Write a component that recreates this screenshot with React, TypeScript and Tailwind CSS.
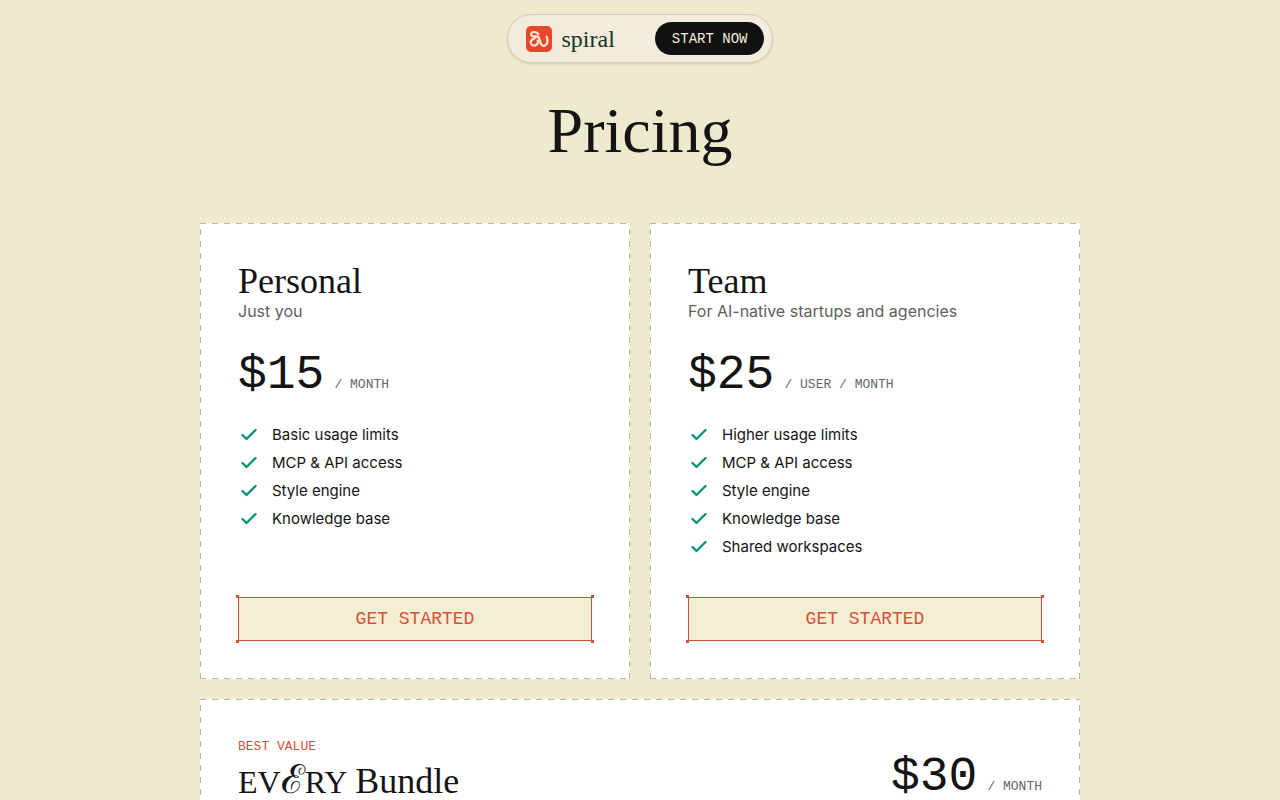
interface Plan {
  name: string
  tagline: string
  price: string
  unit: string
  features: string[]
}

const plans: Plan[] = [
  {
    name: 'Personal',
    tagline: 'Just you',
    price: '$15',
    unit: '/ MONTH',
    features: ['Basic usage limits', 'MCP & API access', 'Style engine', 'Knowledge base'],
  },
  {
    name: 'Team',
    tagline: 'For AI-native startups and agencies',
    price: '$25',
    unit: '/ USER / MONTH',
    features: ['Higher usage limits', 'MCP & API access', 'Style engine', 'Knowledge base', 'Shared workspaces'],
  },
]

function Logo() {
  return (
    <svg viewBox="0 0 26 26" className="size-[26px] shrink-0" aria-hidden="true">
      <rect width="26" height="26" rx="5" fill="#e8472b" />
      <g fill="none" stroke="#f6ecdc" strokeLinecap="round" strokeLinejoin="round">
        <path d="M12.4 8.2C10.8 5.6 6.4 5.2 5.2 7.4c-1 2.2 1.4 3.4 4 3 2.4-.4 3.6.4 4.2 2.4l1.4 4.6c.7 2.2 2.8 3.2 4.6 1.8 2.4-1.8 2.6-5.4 1.2-8.6" strokeWidth="2.1" />
        <path d="M9.8 11C8.4 12.6 4.8 13.4 4.6 16.2c-.1 2.6 2.6 4 5 3 2.2-1 2.8-3 2-4.8" strokeWidth="2.1" />
      </g>
    </svg>
  )
}

function Check() {
  return (
    <svg viewBox="0 0 22 20" className="h-5 w-[22px] shrink-0" aria-hidden="true">
      <path d="M4.5 10l4 4L17.5 5" fill="none" stroke="#0a9373" strokeWidth="2.4" strokeLinecap="round" strokeLinejoin="round" />
    </svg>
  )
}

// Long dashes: 6px on, 6px off along every edge
function DashedFrame() {
  return (
    <svg className="pointer-events-none absolute inset-0 size-full" aria-hidden="true">
      <g fill="none" stroke="#b9b8a2" strokeWidth="2" strokeDasharray="6 6">
        <line x1="0" y1="0" x2="100%" y2="0" />
        <line x1="0" y1="100%" x2="100%" y2="100%" />
        <line x1="0" y1="6" x2="0" y2="100%" />
        <line x1="100%" y1="6" x2="100%" y2="100%" />
      </g>
    </svg>
  )
}

function Price({ amount, unit }: { amount: string; unit: string }) {
  return (
    <p className="flex items-baseline gap-2.5 font-['Liberation_Mono',monospace]">
      <span className="text-5xl leading-[56px]">{amount}</span>
      <span className="text-[13px] leading-4 text-[#666]">{unit}</span>
    </p>
  )
}

function GetStarted() {
  return (
    <button className="relative mt-auto h-11 w-full border border-[#cd4f38] bg-[#f4eed3] font-['Liberation_Mono',monospace] text-lg text-[#d9503a]">
      GET STARTED
      <span className="absolute -left-[3px] -top-[3px] size-[3px] bg-[#cd4f38]" />
      <span className="absolute -right-[3px] -top-[3px] size-[3px] bg-[#cd4f38]" />
      <span className="absolute -bottom-[3px] -left-[3px] size-[3px] bg-[#cd4f38]" />
      <span className="absolute -bottom-[3px] -right-[3px] size-[3px] bg-[#cd4f38]" />
    </button>
  )
}

function PlanCard({ plan }: { plan: Plan }) {
  return (
    <section className="relative flex flex-col bg-white p-[38px]">
      <DashedFrame />
      <h2 className="font-['Liberation_Serif',serif] text-4xl leading-10">{plan.name}</h2>
      <p className="text-base leading-5 text-[#606060]">{plan.tagline}</p>
      <div className="mt-[26px]">
        <Price amount={plan.price} unit={plan.unit} />
      </div>
      <ul className="mb-9 mt-[18px] text-[15px] leading-7">
        {plan.features.map((feature) => (
          <li key={feature} className="flex items-center gap-3">
            <Check />
            {feature}
          </li>
        ))}
      </ul>
      <GetStarted />
    </section>
  )
}

export default function App() {
  return (
    <div className="min-h-screen bg-[#eeeacd] px-5 pb-20 pt-3.5 font-[Inter,sans-serif] text-[#141414]">
      <nav className="mx-auto flex w-fit items-center rounded-full border border-[#d6ccb8] bg-[#f3ebdb] py-[7px] pl-[18px] pr-2 shadow-sm">
        <a href="#home" className="flex items-center gap-2.5">
          <Logo />
          <span className="font-['Liberation_Serif',serif] text-2xl leading-7 text-[#173620]">spiral</span>
        </a>
        <button className="ml-10 h-[33px] rounded-full bg-[#111] px-[17px] font-['Liberation_Mono',monospace] text-sm text-[#f3ebdb]">
          START NOW
        </button>
      </nav>
      <main className="mx-auto max-w-[880px]">
        <h1 className="mt-8 text-center font-['Liberation_Serif',serif] text-[64px] leading-[72px]">Pricing</h1>
        <div className="mt-14 grid gap-5 md:grid-cols-2">
          {plans.map((plan) => (
            <PlanCard key={plan.name} plan={plan} />
          ))}
          <section className="relative flex items-start justify-between bg-white p-[38px] md:col-span-2">
            <DashedFrame />
            <div>
              <p className="font-['Liberation_Mono',monospace] text-[13px] leading-5 text-[#d9503a]">BEST VALUE</p>
              <h2 className="mt-0.5 flex items-baseline gap-2 font-['Liberation_Serif',serif] text-4xl leading-10">
                <span className="text-[32px]">
                  EV<span className="font-['DejaVu_Sans',sans-serif] text-[40px] font-extralight leading-none">ℰ</span>RY
                </span>
                Bundle
              </h2>
            </div>
            <div className="pt-3">
              <Price amount="$30" unit="/ MONTH" />
            </div>
          </section>
        </div>
      </main>
    </div>
  )
}
